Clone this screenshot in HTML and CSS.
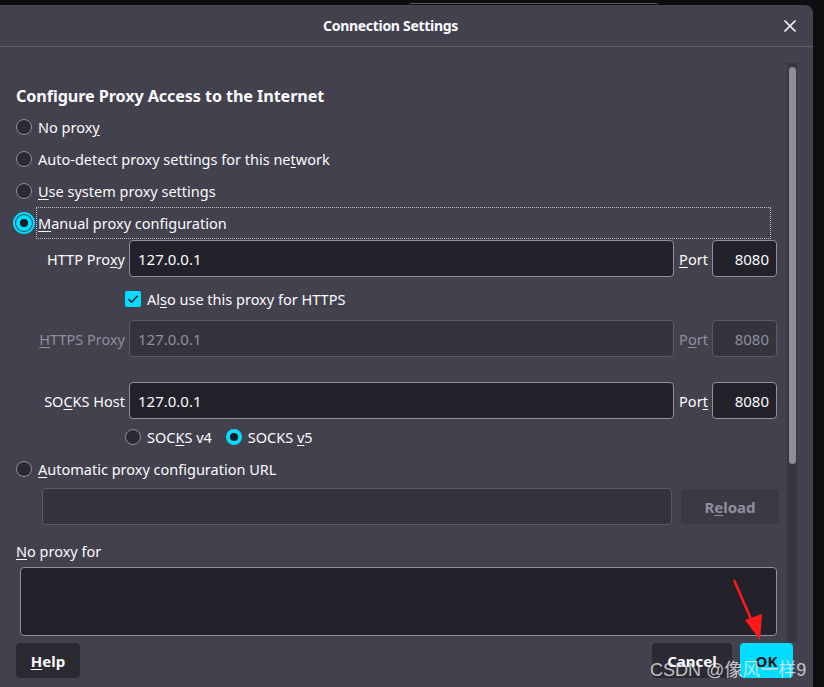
FILE: index.html
```html
<!DOCTYPE html>
<html lang="en">
<head>
<meta charset="utf-8">
<title>Connection Settings</title>
<link rel="stylesheet" href="styles.css">
</head>
<body>
<div class="topstrip"><div class="behind"></div></div>
<div class="dialog">
  <div class="header">
    <div class="title">Connection Settings</div>
    <div class="close">
      <svg width="14" height="14" viewBox="0 0 14 14"><path d="M1.5 1.5 L12.5 12.5 M12.5 1.5 L1.5 12.5" stroke="#fbfbfe" stroke-width="1.6" fill="none"/></svg>
    </div>
  </div>
  <div class="main">
    <div class="content">
      <h1 class="heading">Configure Proxy Access to the Internet</h1>
      <div class="radio-row"><span class="radio"></span><span class="lbl">No prox<u>y</u></span></div>
      <div class="radio-row"><span class="radio"></span><span class="lbl">Auto-detect proxy settings for this ne<u>t</u>work</span></div>
      <div class="radio-row"><span class="radio"></span><span class="lbl"><u>U</u>se system proxy settings</span></div>
      <div class="radio-row"><span class="radio checked focus"></span><span class="lbl focused"><u>M</u>anual proxy configuration</span></div>

      <div class="fields">
        <div class="flabel">HTTP Pro<u>x</u>y</div>
        <div class="input">127.0.0.1</div>
        <div class="plabel"><u>P</u>ort</div>
        <div class="input port">8080</div>

        <div class="check-row">
          <span class="checkbox"><svg width="16" height="16" viewBox="0 0 16 16"><path d="M3.5 8.2 L6.6 11.2 L12.6 4.8" stroke="#1c1b22" stroke-width="1.6" fill="none"/></svg></span>
          <span class="lbl">Al<u>s</u>o use this proxy for HTTPS</span>
        </div>

        <div class="flabel disabled"><u>H</u>TTPS Proxy</div>
        <div class="input dis">127.0.0.1</div>
        <div class="plabel disabled">P<u>o</u>rt</div>
        <div class="input port dis">8080</div>

        <div class="spacer"></div>

        <div class="flabel">SO<u>C</u>KS Host</div>
        <div class="input">127.0.0.1</div>
        <div class="plabel">Por<u>t</u></div>
        <div class="input port">8080</div>

        <div class="socks-row">
          <span class="radio"></span><span class="lbl">SOC<u>K</u>S v4</span>
          <span class="radio checked v5"></span><span class="lbl">SOCKS <u>v</u>5</span>
        </div>
      </div>

      <div class="radio-row auto"><span class="radio"></span><span class="lbl"><u>A</u>utomatic proxy configuration URL</span></div>
      <div class="url-row">
        <div class="input dis url"></div>
        <div class="btn reload">R<u>e</u>load</div>
      </div>
      <div class="noproxy"><u>N</u>o proxy for</div>
      <div class="textarea"></div>
    </div>
    <div class="scrollbar"><div class="thumb"></div></div>
  </div>
  <div class="footer">
    <div class="btn help"><u>H</u>elp</div>
    <div class="right-btns">
      <div class="btn cancel">Cancel</div>
      <div class="btn ok">OK</div>
    </div>
  </div>
  <svg class="arrow" width="60" height="80" viewBox="0 0 60 80">
    <path d="M7 2 L27 48" stroke="#ff1a1a" stroke-width="2.5" fill="none"/>
    <path d="M18 42 L35 36 L33 62 Z" fill="#ff1a1a"/>
  </svg>
  <div class="watermark">CSDN @像风一样9</div>
</div>
</body>
</html>
```

FILE: styles.css
```css
* { box-sizing: border-box; }
html, body { margin: 0; padding: 0; }
body {
  width: 824px;
  height: 687px;
  overflow: hidden;
  background: #0e0e10;
  font-family: "Noto Sans", "Open Sans", sans-serif;
  font-size: 14.5px;
  color: #fbfbfe;
}
u { text-decoration: underline; text-underline-offset: 2px; }

.topstrip {
  height: 5px;
  position: relative;
}
.behind {
  position: absolute;
  left: 409px;
  top: 3px;
  width: 249px;
  height: 2px;
  border-top: 1px solid #5a5a60;
  border-radius: 2px 2px 0 0;
}

.dialog {
  position: relative;
  width: 813px;
  height: 682px;
  background: #42414d;
  border-top-right-radius: 8px;
  display: flex;
  flex-direction: column;
}

.header {
  height: 42px;
  border-bottom: 1px solid #5f5e69;
  display: flex;
  align-items: center;
  justify-content: center;
  padding-right: 32px;
  position: relative;
  flex: none;
}
.title {
  font-weight: bold;
  font-size: 14px;
  letter-spacing: -0.3px;
}
.close {
  position: absolute;
  right: 16px;
  top: 14px;
  width: 14px;
  height: 14px;
  display: flex;
}

.main {
  height: 595px;
  display: flex;
  flex: none;
}
.content {
  flex: 1;
  overflow: hidden;
  padding: 37px 0 0 16px;
  display: flex;
  flex-direction: column;
}
.heading {
  margin: 0;
  font-size: 16.2px;
  font-weight: bold;
  line-height: 24px;
  height: 27px;
  letter-spacing: -0.1px;
}

.radio-row {
  height: 32px;
  display: flex;
  align-items: center;
  gap: 6px;
  flex: none;
}
.radio-row .lbl { line-height: 30px; }
.radio {
  width: 16px;
  height: 16px;
  border-radius: 50%;
  background: #2b2a33;
  border: 1px solid #8f8f9d;
  flex: none;
  position: relative;
}
.radio.checked {
  background: #1c1b22;
  border: 4px solid #00ddff;
}
.radio.focus {
  box-shadow: 0 0 0 1px #42414d, 0 0 0 3px #00ddff;
}
.lbl.focused {
  flex: 1;
  margin-right: 17px;
  margin-left: -1px;
  padding-left: 1px;
  outline: 1px dotted #bdbdc4;
  height: 30px;
}

.fields {
  display: grid;
  grid-template-columns: 113px 545px 38px 65px;
  grid-auto-rows: auto;
  margin-top: 1px;
  flex: none;
}
.flabel {
  height: 37px;
  display: flex;
  align-items: center;
  justify-content: flex-end;
  padding-right: 4px;
}
.plabel {
  height: 37px;
  display: flex;
  align-items: center;
  justify-content: center;
  padding-left: 1px;
}
.disabled { color: #8f8f9d; }
.input {
  height: 37px;
  background: #23222b;
  border: 1px solid #8f8f9d;
  border-radius: 4px;
  display: flex;
  align-items: center;
  padding-left: 8px;
  color: #fbfbfe;
  font-size: 15px;
}
.input.dis {
  background: #35343e;
  border-color: #5a5964;
  color: #8f8f9d;
}
.input.port {
  justify-content: flex-end;
  padding-right: 7px;
  padding-left: 0;
}
.check-row {
  grid-column: 1 / -1;
  height: 43px;
  display: flex;
  align-items: center;
  gap: 6px;
  padding-left: 109px;
}
.checkbox {
  width: 16px;
  height: 16px;
  background: #00ddff;
  border-radius: 2px;
  display: flex;
  flex: none;
}
.spacer { grid-column: 1 / -1; height: 25px; }
.socks-row {
  grid-column: 1 / -1;
  height: 35px;
  display: flex;
  align-items: center;
  gap: 6px;
  padding-left: 109px;
}
.socks-row .radio.v5 { margin-left: 8px; }

.radio-row.auto { height: 30px; }

.url-row {
  display: flex;
  gap: 9px;
  margin-top: 4px;
  padding-left: 26px;
  align-items: center;
  flex: none;
}
.input.url { width: 630px; }
.btn {
  border-radius: 4px;
  font-weight: bold;
  display: flex;
  align-items: center;
  justify-content: center;
  height: 35px;
  font-size: 15px;
}
.reload {
  width: 98px;
  background: #3a3944;
  color: #8f8f9d;
}
.noproxy {
  margin-top: 12px;
  height: 28px;
  line-height: 28px;
  flex: none;
}
.textarea {
  margin-top: 2px;
  margin-left: 4px;
  width: 757px;
  height: 69px;
  flex: none;
  background: #23222b;
  border: 1px solid #8f8f9d;
  border-radius: 4px;
}

.scrollbar {
  width: 10px;
  flex: none;
  margin: 16px 16px 0 0;
  background: #38373f;
  padding: 4px 1px 0 2px;
}
.thumb {
  height: 397px;
  background: #8f8e96;
  border-radius: 4px;
}

.footer {
  flex: 1;
  display: flex;
  justify-content: space-between;
  align-items: flex-start;
  padding: 1px 20px 0 16px;
}
.help {
  width: 64px;
  background: #2b2a33;
}
.right-btns { display: flex; gap: 8px; }
.cancel {
  width: 80px;
  background: #2b2a33;
}
.ok {
  width: 53px;
  background: #00ddff;
  color: #15141a;
}

.arrow {
  position: absolute;
  left: 727px;
  top: 573px;
}
.watermark {
  position: absolute;
  left: 650px;
  top: 650px;
  font-family: "Liberation Sans", "Noto Sans CJK SC", sans-serif;
  font-size: 18px;
  color: rgba(235, 235, 240, 0.78);
  white-space: nowrap;
}
```
